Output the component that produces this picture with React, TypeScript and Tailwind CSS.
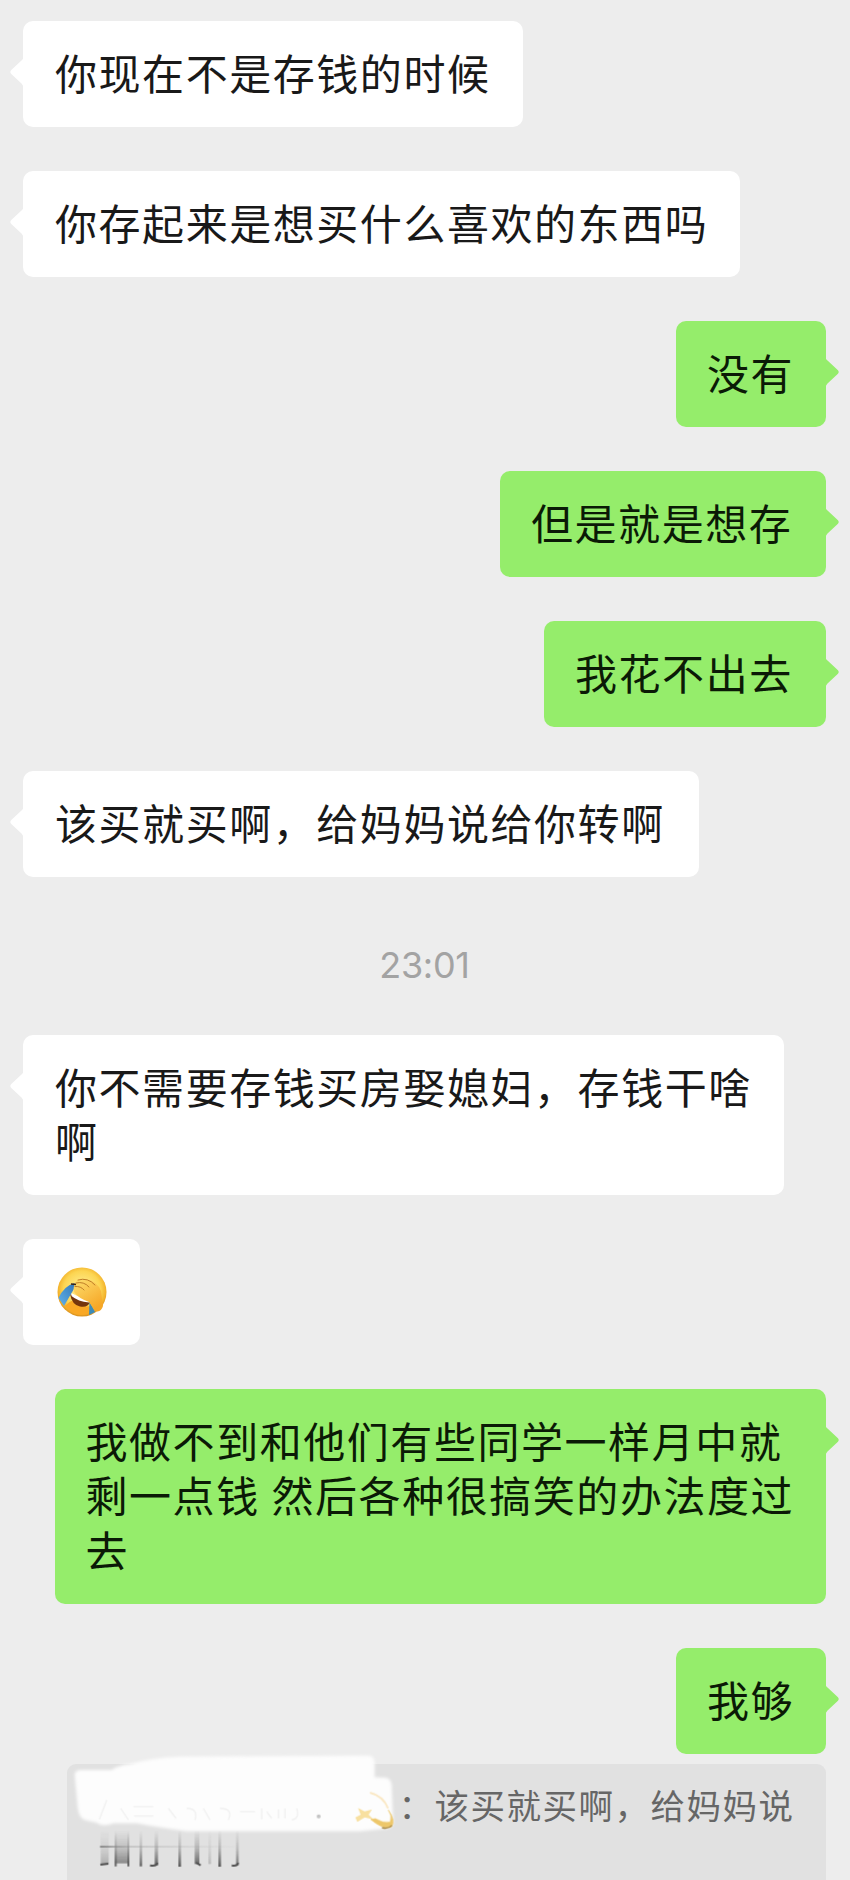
import type { ReactNode } from "react";

function Tail({ side }: { side: "left" | "right" }) {
  return (
    <svg
      viewBox="0 0 14 32"
      className={
        side === "left"
          ? "absolute top-[35px] -left-[13px] h-8 w-3.5 fill-white"
          : "absolute top-[35px] -right-[13px] h-8 w-3.5 -scale-x-100 fill-[#95ed6b]"
      }
    >
      <path d="M14 0C14 2 13 3 11.500 4.500L1.300 14Q-.700 16 1.300 18L11.500 27.500Q13 29 14 32Z" />
    </svg>
  );
}

function Bubble({ side, width, children }: { side: "left" | "right"; width: string; children: ReactNode }) {
  return (
    <div className={side === "left" ? "flex justify-start" : "flex justify-end"}>
      <div
        className={`relative ${width} rounded-[10px] pt-[27.6px] pb-[24px] text-[42px] leading-[54.4px] tracking-[1.55px] whitespace-nowrap ${
          side === "left" ? "bg-white pl-8 text-[#191919]" : "bg-[#95ed6b] pl-[31px] text-[#0b1a06]"
        }`}
      >
        <Tail side={side} />
        {children}
      </div>
    </div>
  );
}

function LaughPalm() {
  return (
    <svg viewBox="0 0 50 50" className="mt-[.4px] mb-[4px] ml-[1.500px] h-[50px] w-[50px]">
      <defs>
        <radialGradient id="face" cx="50%" cy="45%" r="54%">
          <stop offset="0" stopColor="#fff3a0" />
          <stop offset=".7" stopColor="#fcd552" />
          <stop offset=".9" stopColor="#f3b32c" />
          <stop offset="1" stopColor="#dd9420" />
        </radialGradient>
        <linearGradient id="hand" x1="0" y1="0" x2=".6" y2="1">
          <stop offset="0" stopColor="#fde070" />
          <stop offset="1" stopColor="#f6a727" />
        </linearGradient>
        <linearGradient id="tear" x1="1" y1="0" x2="0" y2="1">
          <stop offset="0" stopColor="#3277b8" />
          <stop offset="1" stopColor="#62b2ea" />
        </linearGradient>
      </defs>
      <circle cx="25" cy="25" r="24.500" fill="url(#face)" />
      <path d="M8 39Q14 33 17 34Q25 41 34 39L31 47Q17 51 8 39Z" fill="#f9a825" />
      <path d="M13 27Q22 33 33 35Q31 41 23 39.500Q15 38 13 27Z" fill="#74350d" />
      <path d="M14.500 26Q23 31 33 33L32 35.500Q21 34.500 14.500 29Z" fill="#fff" />
      <path d="M17.500 16L18 20L7 39L1.500 31Q7 19 17.500 16Z" fill="url(#tear)" />
      <path d="M32.500 34L38 45L32 48Z" fill="#3d8bb8" />
      <path d="M17.500 17Q21 10 29 12Q40 14 44 24L46 39Q44 46 38 44L32 35Q21 31 17 25Q16 21 17.500 17Z" fill="url(#hand)" />
      <path
        d="M21 13Q31 10 38 18M19 16Q27 14 32 20M18 19.500Q24 19 27 23"
        fill="none"
        stroke="#b77420"
        strokeWidth=".9"
        strokeLinecap="round"
      />
      <path d="M14 17L19 17.500" stroke="#3b2413" strokeWidth="1.300" />
    </svg>
  );
}

function Scribble() {
  return (
    <svg viewBox="0 0 1080 420" className="absolute -top-6 -left-[27px] h-[140px] w-[360px]">
      <defs>
        <filter id="soft" x="-5%" y="-10%" width="110%" height="120%">
          <feGaussianBlur stdDeviation="5" />
        </filter>
        <filter id="slight" x="-20%" y="-20%" width="140%" height="140%">
          <feGaussianBlur stdDeviation="1.800" />
        </filter>
        <linearGradient id="fade" gradientUnits="userSpaceOnUse" x1="0" y1="272" x2="0" y2="378">
          <stop offset="0" stopColor="#666" stopOpacity="0" />
          <stop offset=".5" stopColor="#666" stopOpacity=".35" />
          <stop offset="1" stopColor="#4a4a4a" stopOpacity=".9" />
        </linearGradient>
        <linearGradient id="line" gradientUnits="userSpaceOnUse" x1="180" y1="0" x2="600" y2="0">
          <stop offset="0" stopColor="#777" stopOpacity=".8" />
          <stop offset=".2" stopColor="#888" stopOpacity=".3" />
          <stop offset="1" stopColor="#999" stopOpacity="0" />
        </linearGradient>
      </defs>
      <path
        d="M104 104Q106 90 122 90L215 90Q235 76 270 72Q340 52 420 50L985 47Q1004 48 1004 70L1004 112L1035 113Q1053 114 1055 135L1059 245Q1058 266 1030 267L960 274L440 274Q350 262 290 250L220 250Q190 262 170 248L135 240Q116 234 113 200Z"
        fill="#fdfdfd"
        filter="url(#soft)"
      />
      <g filter="url(#slight)">
        <path
          d="M178 238L200 180M242 205L265 240M280 200H340M282 228H340M385 205L408 235M440 205Q475 205 465 240M490 205L510 240M540 205Q580 205 565 240M600 215H645M665 205V238M680 215L695 235M715 208V235M735 205V235M770 205Q780 235 755 240"
          fill="none"
          stroke="#dedede"
          strokeWidth="4"
          opacity=".38"
        />
        <circle cx="836" cy="229" r="6" fill="#c4c4c4" />
        <path d="M990 158Q1030 168 1044 205" fill="none" stroke="#fae8c5" strokeWidth="6" />
        <path d="M946 232L962 224L954 204L974 214L996 208L986 224L1000 238L974 232L952 246Z" fill="#f8e0a0" />
        <path d="M1006 236Q1028 250 1051 246Q1057 226 1045 210Q1068 242 1054 261Q1030 270 992 238Z" fill="#edc76b" stroke="#edc76b" strokeWidth="2" />
        <path d="M1026 263Q1045 268 1056 256" fill="none" stroke="#a98a45" strokeWidth="4" />
      </g>
      <g fill="url(#fade)" filter="url(#slight)">
        <rect x="182" y="272" width="24" height="100" opacity=".4" />
        <rect x="225" y="272" width="42" height="98" opacity=".75" />
        <rect x="224" y="272" width="6" height="107" />
        <rect x="262" y="272" width="6" height="107" />
        <rect x="299" y="272" width="7" height="107" />
        <rect x="344" y="272" width="10" height="104" />
        <rect x="415" y="272" width="8" height="108" />
        <rect x="464" y="272" width="14" height="100" />
        <rect x="505" y="272" width="8" height="100" opacity=".3" />
        <rect x="535" y="272" width="8" height="108" />
        <rect x="588" y="272" width="8" height="104" opacity=".8" />
      </g>
      <rect x="180" y="317" width="420" height="6" fill="url(#line)" />
      <path
        d="M181 374L205 371M330 376Q352 379 352 368M468 368L482 376M575 376Q594 379 594 368"
        fill="none"
        stroke="#505050"
        strokeWidth="6"
        filter="url(#slight)"
      />
    </svg>
  );
}

export default function App() {
  return (
    <main className="flex h-[1880px] w-[850px] flex-col gap-11 overflow-hidden bg-[#ededed] pt-[21px] pr-6 pl-[23px] font-['Liberation_Sans','Noto_Sans_CJK_SC',sans-serif]">
      <Bubble side="left" width="w-[500px]">你现在不是存钱的时候</Bubble>
      <Bubble side="left" width="w-[717px]">你存起来是想买什么喜欢的东西吗</Bubble>
      <Bubble side="right" width="w-[150px]">没有</Bubble>
      <Bubble side="right" width="w-[326px]">但是就是想存</Bubble>
      <Bubble side="right" width="w-[282px]">我花不出去</Bubble>
      <Bubble side="left" width="w-[676px]">该买就买啊，给妈妈说给你转啊</Bubble>
      <time className="mt-[22px] mb-[4px] block h-[44px] text-center font-['Inter',sans-serif] text-[36px] leading-[44px] font-normal tracking-[-0.3px] text-[#a3a3a3]">
        23:01
      </time>
      <Bubble side="left" width="w-[761px]">
        你不需要存钱买房娶媳妇，存钱干啥
        <br />
        啊
      </Bubble>
      <Bubble side="left" width="w-[117px]">
        <LaughPalm />
      </Bubble>
      <Bubble side="right" width="w-[771.5px]">
        我做不到和他们有些同学一样月中就
        <br />
        <span className="[word-spacing:-1.4px]">剩一点钱 然后各种很搞笑的办法度过</span>
        <br />去
      </Bubble>
      <Bubble side="right" width="w-[150px]">我够</Bubble>
      <div className="relative -mt-[34px] ml-11 h-[120px] shrink-0 rounded-t-[9px] bg-[#e1e1e1] pt-[20px] pl-[331.5px] text-[34.5px] leading-[46px] tracking-[1.5px] whitespace-nowrap text-[#666]">
        ：该买就买啊，给妈妈说
        <Scribble />
      </div>
    </main>
  );
}
